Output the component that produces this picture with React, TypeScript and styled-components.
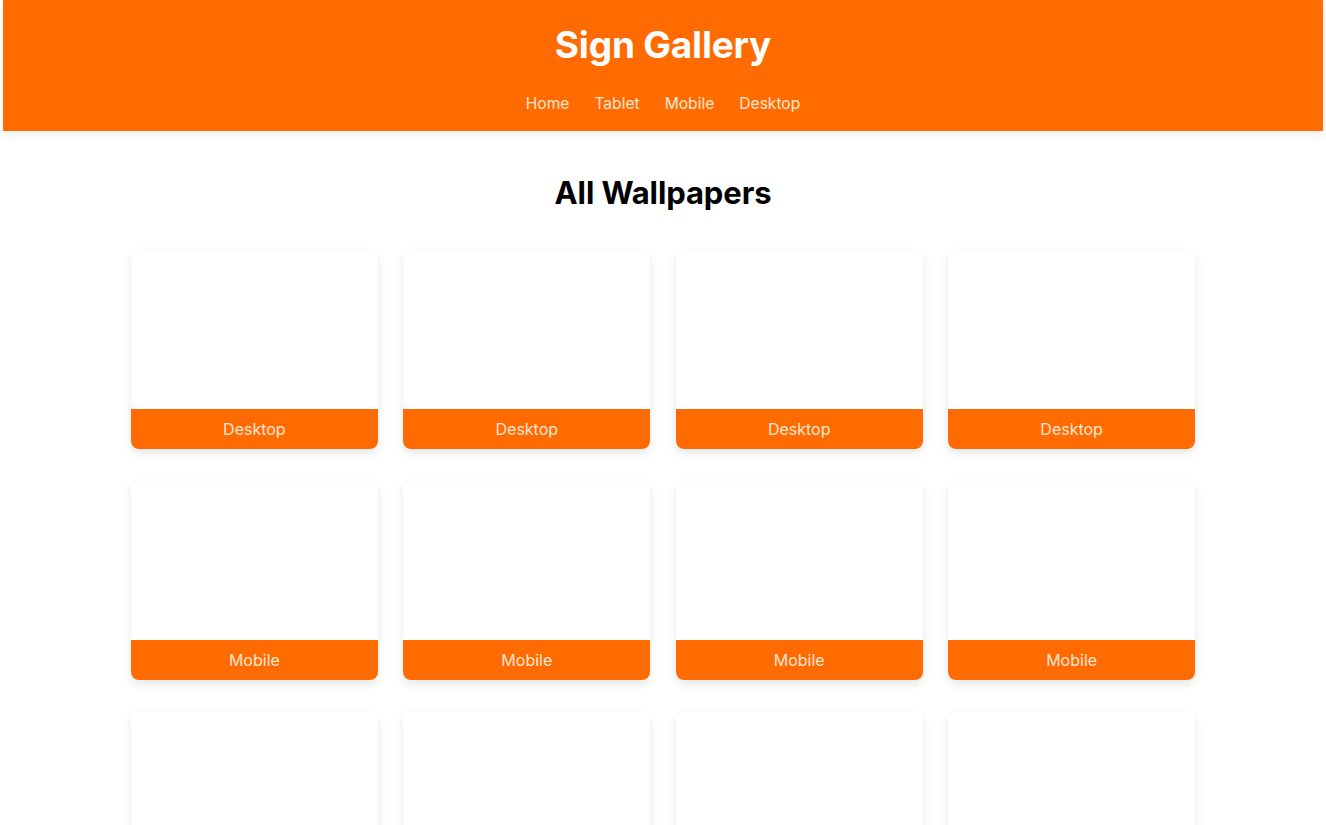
import React from "react";
import styled, { createGlobalStyle } from "styled-components";

const Global = createGlobalStyle`
  html, body { margin: 0; padding: 0; background: #fff; }
  body { font-family: Inter, "Noto Sans", "Liberation Sans", sans-serif; }
  * { box-sizing: border-box; }
`;

const ORANGE = "#ff6b00";

const Header = styled.header`
  margin: 0 3px;
  height: 131px;
  background: ${ORANGE};
  display: flex;
  flex-direction: column;
  align-items: center;
  box-shadow: 0 4px 8px rgba(0, 0, 0, 0.08);
`;

const Title = styled.h1`
  margin: 23px 0 0;
  font-size: 37px;
  line-height: 44px;
  font-weight: 700;
  color: #fff;
  letter-spacing: -0.2px;
`;

const Nav = styled.nav`
  margin-top: 27px;
  display: flex;
  gap: 25px;
`;

const NavLink = styled.a`
  font-size: 15.6px;
  line-height: 20px;
  color: #ffe6d3;
  text-decoration: none;
`;

const Main = styled.main`
  display: flex;
  flex-direction: column;
  align-items: center;
`;

const Heading = styled.h2`
  margin: 44px 0 0;
  font-size: 31px;
  line-height: 36px;
  font-weight: 700;
  color: #000;
  letter-spacing: -0.1px;
`;

const Grid = styled.div`
  margin-top: 39px;
  width: 1064px;
  display: grid;
  grid-template-columns: repeat(4, 1fr);
  column-gap: 25.67px;
  row-gap: 32px;
`;

const Card = styled.div`
  height: 199px;
  border-radius: 8px;
  overflow: hidden;
  background: #fff;
  display: flex;
  flex-direction: column;
  box-shadow: 0 4px 10px rgba(0, 0, 0, 0.1);
`;

const ImageArea = styled.div`
  flex: 1;
  background: #fff;
`;

const Label = styled.div`
  height: 40px;
  background: ${ORANGE};
  color: #ffe6d3;
  font-size: 16px;
  display: flex;
  align-items: center;
  justify-content: center;
`;

const cards = [
  ...Array(4).fill("Desktop"),
  ...Array(4).fill("Mobile"),
  ...Array(4).fill("Tablet"),
];

export default function App() {
  return (
    <>
      <Global />
      <Header>
        <Title>Sign Gallery</Title>
        <Nav>
          {["Home", "Tablet", "Mobile", "Desktop"].map((n) => (
            <NavLink key={n} href="#">
              {n}
            </NavLink>
          ))}
        </Nav>
      </Header>
      <Main>
        <Heading>All Wallpapers</Heading>
        <Grid>
          {cards.map((c, i) => (
            <Card key={i}>
              <ImageArea />
              <Label>{c}</Label>
            </Card>
          ))}
        </Grid>
      </Main>
    </>
  );
}
